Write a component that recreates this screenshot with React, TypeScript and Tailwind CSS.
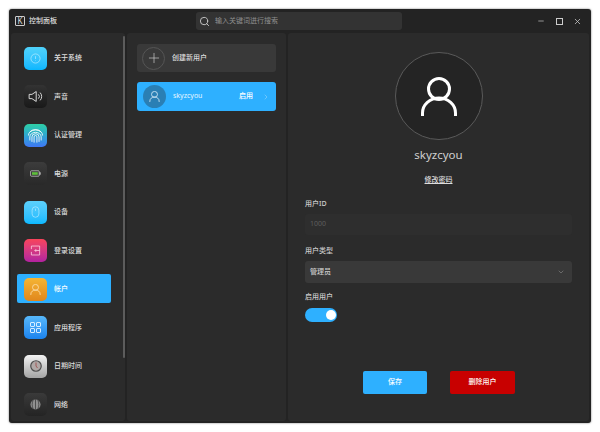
import { ChevronDown, ChevronRight, Minus, Plus, Search, X } from "lucide-react";
import type { ReactNode } from "react";

const FONT = "font-['Noto_Sans','Noto_Sans_CJK_SC',sans-serif]";

function PersonIcon({ className }: { className: string }) {
  return (
    <svg viewBox="0 0 36 39" fill="none" stroke="currentColor" strokeWidth="3" className={className}>
      <circle cx="18" cy="12" r="10.5" />
      <path d="M1.5 39v-3a16.5 15 0 0 1 33 0v3" />
    </svg>
  );
}

const navItems: { label: string; bg: string; icon: ReactNode; active?: boolean }[] = [
  {
    label: "关于系统",
    bg: "bg-gradient-to-b from-[#4fd2fb] to-[#06b7ff]",
    icon: (
      <svg viewBox="0 0 24 24" fill="none" stroke="#cdf1ff" strokeWidth="1.3" className="h-[11px] w-[11px]">
        <circle cx="12" cy="12" r="10" />
        <path d="M12 7v6M12 16v1" />
      </svg>
    ),
  },
  {
    label: "声音",
    bg: "bg-gradient-to-b from-[#333333] to-[#191919]",
    icon: (
      <svg viewBox="0 0 24 24" fill="none" stroke="#d8d8d8" strokeWidth="1.4" className="h-[17px] w-[17px]">
        <path d="M3 9h4l6-4v14l-6-4H3z" />
        <path d="M16 9a4 4 0 0 1 0 6M18.5 6.5a8 8 0 0 1 0 11" />
      </svg>
    ),
  },
  {
    label: "认证管理",
    bg: "bg-gradient-to-b from-[#2fcfa4] to-[#3f76f5]",
    icon: (
      <svg viewBox="0 0 24 24" fill="none" stroke="#ffffff" strokeWidth="1.2" className="h-[17px] w-[17px]">
        <path d="M4 7a10 8 0 0 1 16 0M2 12a10 8 0 0 1 20 0" />
        <path d="M4 19v-5a8 6.5 0 0 1 16 0v5M7 21v-7a5 4.5 0 0 1 10 0v7M10 22v-8a2 2 0 0 1 4 0v8" />
      </svg>
    ),
  },
  {
    label: "电源",
    bg: "bg-gradient-to-b from-[#3c3c3c] to-[#292929]",
    icon: (
      <svg viewBox="0 0 12 8" className="h-[7px] w-[11px]">
        <rect x="0.4" y="0.9" width="9.8" height="6.2" rx="0.8" fill="none" stroke="#d8d8d8" strokeWidth="0.8" />
        <rect x="2" y="2.5" width="6.6" height="3" fill="#5fbf3c" />
        <rect x="10.6" y="2.6" width="1.2" height="2.8" fill="#d8d8d8" />
      </svg>
    ),
  },
  {
    label: "设备",
    bg: "bg-gradient-to-b from-[#5cd0fb] to-[#07b9ff]",
    icon: (
      <svg viewBox="0 0 12 16" fill="none" stroke="#c6efff" strokeWidth="0.8" className="h-[12px] w-[9px]">
        <rect x="1.5" y="1" width="9" height="14" rx="4.5" />
        <path d="M6 3.5v3" />
      </svg>
    ),
  },
  {
    label: "登录设置",
    bg: "bg-gradient-to-b from-[#f8435a] to-[#b3219f]",
    icon: (
      <svg viewBox="0 0 16 16" fill="none" stroke="#ffd8e4" strokeWidth="1.1" className="h-[11px] w-[11px]">
        <path d="M2 6V1.5h12v13H2V10M14 8H7M9 6l-2 2 2 2" />
      </svg>
    ),
  },
  {
    label: "帐户",
    bg: "bg-gradient-to-b from-[#f5b534] to-[#e0871c]",
    active: true,
    icon: <PersonIcon className="h-[11px] w-[11px] text-[#fce0b0]" />,
  },
  {
    label: "应用程序",
    bg: "bg-gradient-to-b from-[#57b8fb] to-[#1a83ee]",
    icon: (
      <div className="grid grid-cols-2 gap-[1px]">
        {[0, 1, 2, 3].map((i) => (
          <div key={i} className="h-[5px] w-[5px] rounded-[1px] border border-[#d5ecff]" />
        ))}
      </div>
    ),
  },
  {
    label: "日期时间",
    bg: "bg-gradient-to-b from-[#f4f4f4] to-[#a4a4a4]",
    icon: (
      <svg viewBox="0 0 24 24" className="h-[12px] w-[12px]">
        <circle cx="12" cy="12" r="10.5" fill="#b0a8a6" stroke="#4d4d4d" strokeWidth="2.4" />
        <path d="M12 5v7l3 4" fill="none" stroke="#9c3f3f" strokeWidth="1.5" />
      </svg>
    ),
  },
  {
    label: "网络",
    bg: "bg-gradient-to-b from-[#3a3a3a] to-[#242424]",
    icon: (
      <svg viewBox="0 0 24 24" fill="none" stroke="#2a2a2a" strokeWidth="1.4" className="h-[11px] w-[11px]">
        <circle cx="12" cy="12" r="11" fill="#8f8f8f" stroke="none" />
        <path d="M12 1v22M7 2.5c-3 5-3 14 0 19M17 2.5c3 5 3 14 0 19" />
      </svg>
    ),
  },
];

function NavItem({ item }: { item: (typeof navItems)[number] }) {
  return (
    <div className="relative flex h-[38.5px] items-center pl-[13px]">
      {item.active && <div className="absolute left-[6px] top-[4px] h-[29px] w-[94px] rounded-[2px] bg-[#2eb0ff]" />}
      <div className={`relative flex h-[23px] w-[23px] items-center justify-center rounded-[5px] ${item.bg}`}>
        {item.icon}
      </div>
      <span className={`relative ml-[7px] text-[7px] font-medium ${item.active ? "text-white" : "text-[#dddddd]"}`}>
        {item.label}
      </span>
    </div>
  );
}

export default function App() {
  return (
    <div className={`h-[432px] w-[600px] overflow-hidden bg-white pl-[9px] pt-[9px] ${FONT}`}>
      <div className="flex h-[414px] w-[582px] flex-col rounded-[3px] bg-[#232323] shadow-[0_0_2px_rgba(0,0,0,0.6)]">
        {/* title bar */}
        <div className="relative flex h-[24px] shrink-0 items-center pl-[6px]">
          <div className="flex h-[10px] w-[10px] items-center justify-center rounded-[1px] border border-[#cccccc] text-[8px] leading-none text-[#dddddd]">
            K
          </div>
          <span className="ml-[4px] text-[7px] font-medium text-[#dddddd]">控制面板</span>
          <div className="ml-[139px] flex h-[18px] w-[206px] items-center rounded-[3px] bg-[#333333] pl-[3px]">
            <Search className="h-[11px] w-[11px] text-[#cccccc]" strokeWidth={2} />
            <span className="ml-[5px] text-[7px] text-[#8f8f8f]">输入关键词进行搜索</span>
          </div>
          <div className="ml-auto flex items-center pr-[9px] text-[#cccccc]">
            <Minus className="h-[8px] w-[8px]" strokeWidth={2} />
            <div className="ml-[11px] h-[7px] w-[7px] border border-[#cccccc]" />
            <X className="ml-[10px] h-[9px] w-[9px]" strokeWidth={2} />
          </div>
        </div>

        <div className="flex min-h-0 flex-1 gap-[2px] pb-[2px] pl-[2px] pr-[2px]">
          {/* sidebar */}
          <div className="relative w-[114px] shrink-0 rounded-[3px] bg-[#2b2b2b]">
            <div className="mt-[6px]">
              {navItems.map((item) => (
                <NavItem key={item.label} item={item} />
              ))}
            </div>
            <div className="absolute right-0 top-[3px] h-[322px] w-[2px] rounded-full bg-[#5c5c5c]" />
          </div>

          {/* user list */}
          <div className="flex w-[159px] shrink-0 flex-col gap-[10px] rounded-[3px] bg-[#2b2b2b] px-[10px] pt-[11px]">
            <div className="flex h-[28px] items-center rounded-[3px] bg-[#393939] pl-[5px]">
              <div className="flex h-[23px] w-[23px] items-center justify-center rounded-full border border-[#555555]">
                <Plus className="h-[16px] w-[16px] text-[#cfcfcf]" strokeWidth={1} />
              </div>
              <span className="ml-[7px] text-[7px] font-medium text-[#dddddd]">创建新用户</span>
            </div>
            <div className="flex h-[29px] items-center rounded-[3px] bg-[#2eb0ff] pl-[6px] pr-[6px]">
              <div className="flex h-[23px] w-[23px] items-center justify-center rounded-full bg-[#2a7fb4]">
                <PersonIcon className="h-[11px] w-[11px] text-[#d5ebf8]" />
              </div>
              <span className="ml-[7px] text-[7px] text-[#e6f6ff]">skyzcyou</span>
              <span className="ml-auto text-[7px] font-medium text-white">启用</span>
              <ChevronRight className="ml-[9px] h-[8px] w-[8px] text-[#a9dcfb]" strokeWidth={1.5} />
            </div>
          </div>

          {/* detail */}
          <div className="flex min-w-0 flex-1 flex-col rounded-[3px] bg-[#2b2b2b] px-[17px]">
            <div className="mx-auto mt-[19px] flex h-[88px] w-[88px] items-center justify-center rounded-full border border-[#5a5a5a] bg-[#242424]">
              <PersonIcon className="h-[39px] w-[36px] text-white" />
            </div>
            <div className="mt-[6px] text-center text-[11.5px] leading-[18px] text-[#cfcfcf]">skyzcyou</div>
            <div className="mt-[10px] text-center text-[7px] font-medium leading-[12px] text-[#dddddd] underline">修改密码</div>

            <div className="mt-[13px] text-[7px] font-medium leading-[10px] text-[#cccccc]">用户ID</div>
            <div className="mt-[5px] flex h-[21px] items-center rounded-[3px] bg-[#2e2e2e] pl-[5px] text-[7px] text-[#5e5e5e]">
              1000
            </div>
            <div className="mt-[11px] text-[7px] font-medium leading-[10px] text-[#cccccc]">用户类型</div>
            <div className="mt-[5px] flex h-[22px] items-center rounded-[3px] bg-[#393939] pl-[5px] pr-[7px] text-[7px] font-medium text-[#cccccc]">
              管理员
              <ChevronDown className="ml-auto h-[8px] w-[8px] text-[#9a9a9a]" strokeWidth={1.5} />
            </div>
            <div className="mt-[9px] text-[7px] font-medium leading-[10px] text-[#cccccc]">启用用户</div>
            <div className="mt-[6px] flex h-[14px] w-[32px] items-center justify-end rounded-full bg-[#2eb0ff] pr-[1px]">
              <div className="h-[10px] w-[10px] rounded-full bg-white" />
            </div>

            <div className="mt-[49px] flex justify-center gap-[23px] pl-[1px]">
              <div className="flex h-[23px] w-[64px] items-center justify-center rounded-[2px] bg-[#2eb0ff] text-[7px] font-medium text-white">
                保存
              </div>
              <div className="flex h-[23px] w-[65px] items-center justify-center rounded-[2px] bg-[#c80000] text-[7px] font-medium text-white">
                删除用户
              </div>
            </div>
          </div>
        </div>
      </div>
    </div>
  );
}
